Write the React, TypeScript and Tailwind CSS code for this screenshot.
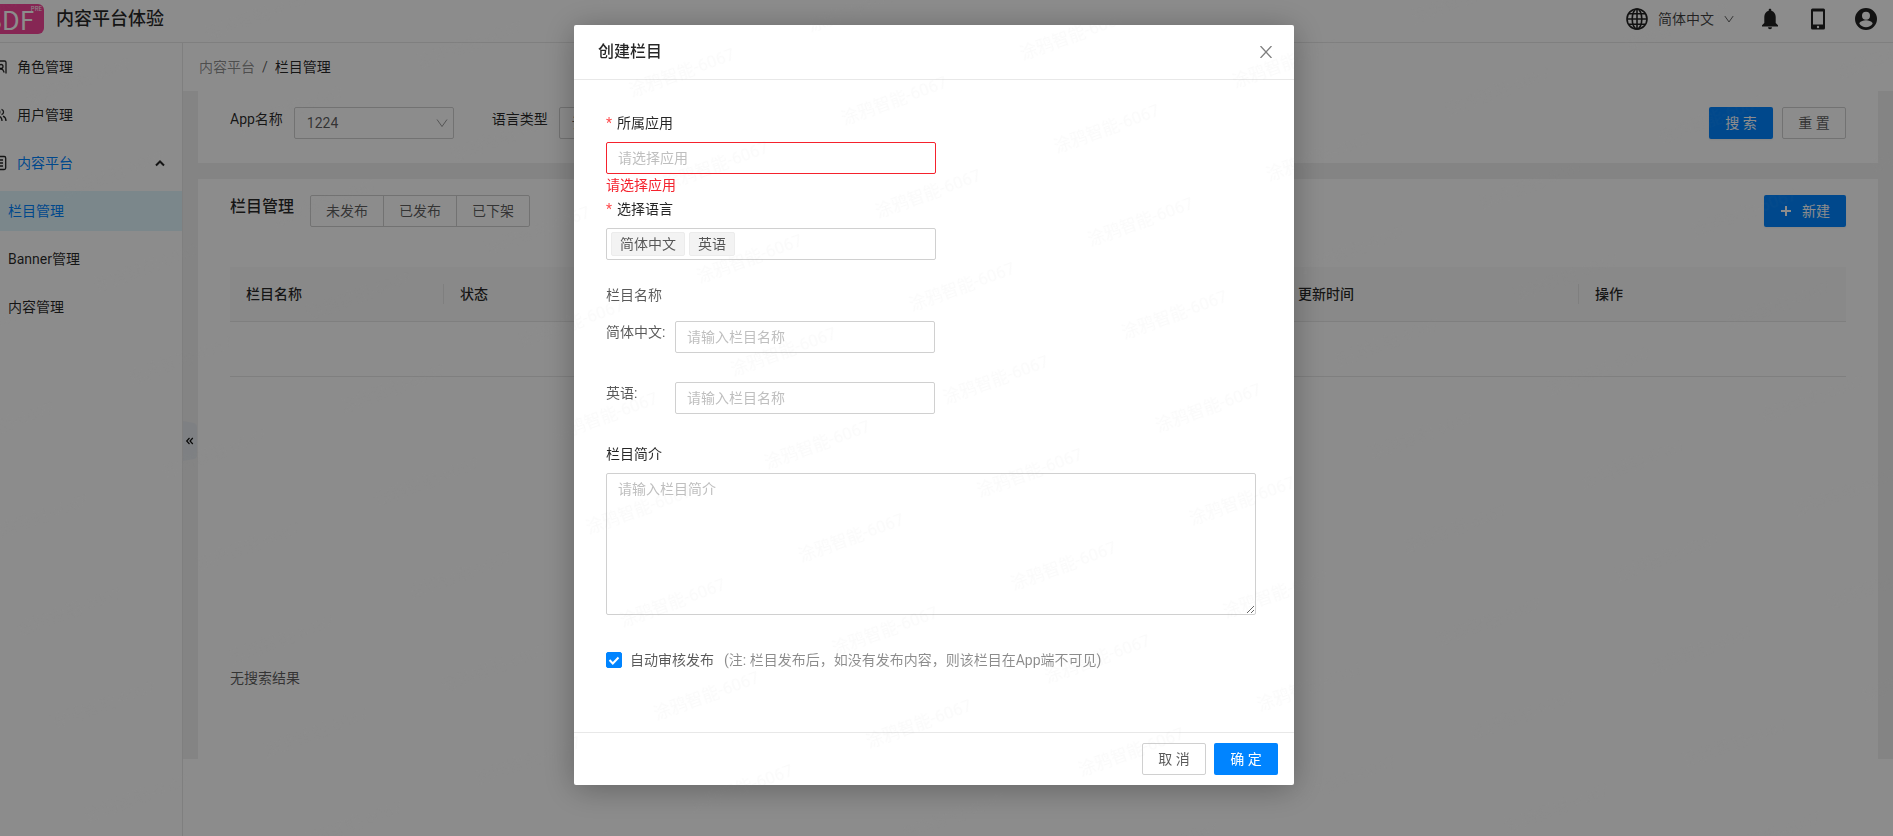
import { useState } from 'react';
import type { ReactNode } from 'react';

const menu = [
  { label: '角色管理', icon: 'role' },
  { label: '用户管理', icon: 'user' },
  { label: '内容平台', icon: 'content', open: true },
];

const subMenu = [
  { label: '栏目管理', active: true },
  { label: 'Banner管理', active: false },
  { label: '内容管理', active: false },
];

const statusTabs = ['未发布', '已发布', '已下架'];

function MenuIcon({ name }: { name: string }) {
  return (
    <svg className="h-4 w-4" viewBox="0 0 16 16" fill="none" stroke="currentColor" strokeWidth={1.3}>
      {name === 'role' && (
        <>
          <path d="M2 14.500V3.500A1.500 1.500 0 0 1 3.500 2h10A1.500 1.500 0 0 1 15 3.500v11" />
          <circle cx="10" cy="7.500" r="2" />
          <path d="M6.500 13c.3-2 1.700-3 3.500-3 1 0 1.500.4 2 1l1.200 2.500" />
        </>
      )}
      {name === 'user' && (
        <>
          <circle cx="6" cy="5" r="2.800" />
          <path d="M1 14c0-3 2-5 5-5s5 2 5 5M10.500 2.300a2.800 2.800 0 0 1 0 5.400M12 9.200c2 .8 3 2.500 3 4.800" />
        </>
      )}
      {name === 'content' && (
        <>
          <rect x="1.700" y="1.500" width="13" height="13" rx="1.500" />
          <path d="M4.500 5h7.500M4.500 8h7.500M4.500 11h7.500" />
        </>
      )}
    </svg>
  );
}

function ChevronDown({ className }: { className?: string }) {
  return (
    <svg className={className} viewBox="0 0 12 12" fill="none" stroke="currentColor">
      <path d="M1 2.500 6 9.500l5-7" />
    </svg>
  );
}

function Header() {
  return (
    <header className="flex h-[43px] items-center border-b border-[#e8e8e8] pr-4 pb-1 pl-3">
      <div className="relative flex h-[30px] w-[57px] items-center justify-end rounded-md bg-[#f54599] pr-2.5 font-['Noto_Sans_CJK_SC',sans-serif] text-[26px] leading-none font-normal text-white">
        SDF
        <span className="absolute top-px right-0.5 text-[6px] leading-2">PRE</span>
      </div>
      <h1 className="ml-3 text-lg font-medium text-black/85">内容平台体验</h1>
      <div className="ml-auto flex items-center text-[#222]">
        <button type="button" className="flex items-center text-sm text-black/75">
          <svg className="mr-2.5 h-[22px] w-[22px] text-[#222]" viewBox="0 0 22 22" fill="none" stroke="currentColor" strokeWidth={1.6}>
            <circle cx="11" cy="11" r="10" />
            <ellipse cx="11" cy="11" rx="4.800" ry="10" />
            <path d="M11 1v20M1 11h20M3 5.800h16M3 16.200h16" />
          </svg>
          简体中文
          <ChevronDown className="ml-2.5 h-2.5 w-2.5" />
        </button>
        <button type="button" aria-label="通知" className="ml-[25px]">
          <svg className="h-[22px] w-[22px]" viewBox="0 0 22 22" fill="currentColor">
            <path d="M11 .8c.8 0 1.300.5 1.300 1.300v.6c2.600.7 4.400 3 4.400 6V15l2.300 2.200v1.300H3v-1.300L5.300 15V8.700c0-3 1.800-5.300 4.400-6v-.6c0-.8.5-1.300 1.300-1.300Z" />
            <path d="M9 19.200h4a2 2 0 0 1-4 0Z" />
          </svg>
        </button>
        <button type="button" aria-label="手机" className="ml-[26px]">
          <svg className="h-[22px] w-[22px]" viewBox="0 0 22 22" fill="currentColor">
            <path fillRule="evenodd" d="M5.500.5h11A1.500 1.500 0 0 1 18 2v18a1.500 1.500 0 0 1-1.500 1.500h-11A1.500 1.500 0 0 1 4 20V2A1.500 1.500 0 0 1 5.500.5ZM6 3.500v13h10v-13Zm5 14.300a1.200 1.200 0 1 0 0 2.400 1.200 1.200 0 0 0 0-2.400Z" />
          </svg>
        </button>
        <button type="button" aria-label="账户" className="ml-[26px]">
          <svg className="h-[22px] w-[22px]" viewBox="0 0 22 22" fill="currentColor">
            <path fillRule="evenodd" d="M11 0a11 11 0 1 0 0 22 11 11 0 0 0 0-22Zm0 3.800a4 4 0 1 1 0 8 4 4 0 0 1 0-8Zm0 15.400a8 8 0 0 1-6.600-3.500c0-2.200 4.400-3.400 6.600-3.400s6.600 1.200 6.600 3.400A8 8 0 0 1 11 19.200Z" />
          </svg>
        </button>
      </div>
    </header>
  );
}

function Sidebar() {
  return (
    <nav className="w-52 shrink-0 border-r border-[#e8e8e8] pt-1 text-sm text-black/85">
      <ul className="flex flex-col gap-2">
        {menu.map((item) => (
          <li key={item.label}>
            <a href="#" className="flex h-10 items-center pr-[17px] pl-4">
              <MenuIcon name={item.icon} />
              <span className={item.open ? 'ml-2.5 text-[#0084ff]' : 'ml-2.5'}>{item.label}</span>
              {item.open && (
                <svg className="ml-auto h-2.5 w-2.5" viewBox="0 0 10 10" fill="none" stroke="currentColor" strokeWidth={2}>
                  <path d="M1 7.500 5 3.500l4 4" />
                </svg>
              )}
            </a>
          </li>
        ))}
        {subMenu.map((item) => (
          <li key={item.label}>
            <a
              href="#"
              className={
                item.active
                  ? 'flex h-10 items-center bg-[#e0f6fd] pl-[33px] text-[#0084ff]'
                  : 'flex h-10 items-center pl-[33px]'
              }
            >
              {item.label}
            </a>
          </li>
        ))}
      </ul>
    </nav>
  );
}

function FilterSelect({ id, label, children }: { id: string; label: string; children: ReactNode }) {
  return (
    <div className="flex items-start">
      <label htmlFor={id} className="mr-[11px] leading-6 text-black/85">
        {label}
      </label>
      <div className="relative">
        <select id={id} className="h-8 w-40 appearance-none rounded-xs border border-[#d0d0d0] bg-white px-3 text-black/65">
          {children}
        </select>
        <ChevronDown className="pointer-events-none absolute top-2.5 right-1.5 h-3 w-3 text-black/40" />
      </div>
    </div>
  );
}

function Content() {
  return (
    <main className="min-w-0 flex-1 text-sm">
      <div className="flex h-12 items-center gap-[7px] px-4">
        <a href="#" className="text-black/45">内容平台</a>
        <span className="text-black/65">/</span>
        <span className="text-black/85">栏目管理</span>
      </div>
      <div className="relative flex flex-col gap-4 bg-[#f0f0f0] px-[15px]">
        <section className="flex items-start bg-white px-8 pt-4 pb-6">
          <div className="flex gap-[38px]">
            <FilterSelect id="app" label="App名称">
              <option>1224</option>
            </FilterSelect>
            <FilterSelect id="lang" label="语言类型">
              <option>请选择</option>
            </FilterSelect>
          </div>
          <div className="ml-auto flex gap-[9px]">
            <button type="button" className="h-8 w-16 rounded-xs bg-[#0084ff] text-white shadow-xs">搜 索</button>
            <button type="button" className="h-8 w-16 rounded-xs border border-[#d0d0d0] text-black/65">重 置</button>
          </div>
        </section>

        <section className="bg-white px-8 pt-4 pb-[70px]">
          <div className="flex items-start">
            <h2 className="mr-4 text-base leading-6 font-medium text-black/85">栏目管理</h2>
            <div className="flex divide-x divide-[#d0d0d0] rounded-xs border border-[#d0d0d0]">
              {statusTabs.map((tab) => (
                <button key={tab} type="button" className="h-[30px] px-[15px] text-black/65">
                  {tab}
                </button>
              ))}
            </div>
            <button type="button" className="ml-auto flex h-8 items-center gap-2.5 rounded-xs bg-[#0084ff] px-4 text-white shadow-xs">
              <svg className="h-3 w-3" viewBox="0 0 12 12" stroke="currentColor" strokeWidth={2}>
                <path d="M6 1v10M1 6h10" />
              </svg>
              新建
            </button>
          </div>

          <table className="mt-10 w-full table-fixed border-collapse text-left">
            <thead>
              <tr className="h-[54px] border-b border-[#e8e8e8] bg-[#fafafa] text-black/85">
                <th className="w-[214px] px-4 font-medium">
                  <div className="-mr-4 border-r border-[#e8e8e8]">栏目名称</div>
                </th>
                <th className="px-4 font-medium">状态</th>
                <th className="w-[297px] px-4 font-medium">
                  <div className="-mr-4 border-r border-[#e8e8e8]">更新时间</div>
                </th>
                <th className="w-[267px] px-4 font-medium">操作</th>
              </tr>
            </thead>
            <tbody>
              <tr className="h-[55px] border-b border-[#e8e8e8]">
                <td colSpan={4} />
              </tr>
            </tbody>
          </table>
          <p className="mt-[290px] leading-[22px] text-black/65">无搜索结果</p>
        </section>

        {/* Sidebar collapse handle */}
        <button type="button" aria-label="收起菜单" className="absolute top-[330px] left-0">
          <svg className="h-10 w-3.5" viewBox="0 0 14 40" fill="none">
            <path d="M0 0 11 2q3 1 3 4v28q0 3-3 4L0 40Z" fill="#e6eaef" />
            <path d="M6.500 17 3.700 20l2.800 3M9.800 17 7 20l2.800 3" stroke="#111" strokeWidth={1.200} />
          </svg>
        </button>
      </div>
    </main>
  );
}

function NameField({ id, label }: { id: string; label: string }) {
  return (
    <div className="flex items-start">
      <label htmlFor={id} className="w-[69px] leading-[22px]">{label}:</label>
      <input
        id={id}
        type="text"
        placeholder="请输入栏目名称"
        className="h-8 w-[260px] rounded-xs border border-[#d0d0d0] px-[11px] outline-none placeholder:text-[#bfbfbf]"
      />
    </div>
  );
}

function CreateModal() {
  const [autoPublish, setAutoPublish] = useState(true);

  return (
    <div
      role="dialog"
      aria-modal="true"
      aria-labelledby="modal-title"
      className="w-[720px] rounded-xs bg-white text-sm leading-[22px] text-black/65 shadow-[0_4px_32px_rgba(0,0,0,0.3)]"
    >
      <div className="flex h-[55px] items-center justify-between border-b border-[#e8e8e8] pr-[22px] pl-6">
        <h2 id="modal-title" className="text-base font-medium text-black/85">创建栏目</h2>
        <button type="button" aria-label="关闭" className="text-black/50">
          <svg className="h-3 w-3" viewBox="0 0 12 12" stroke="currentColor" strokeWidth={1.300}>
            <path d="M.5 0l11 12M11.500 0 .5 12" />
          </svg>
        </button>
      </div>

      <form className="px-8 pt-8 pb-[61px]">
        <label htmlFor="owner" className="block text-black/85">
          <span className="mr-[5px] text-[#ff4d4f]">*</span>所属应用
        </label>
        <select
          id="owner"
          defaultValue=""
          className="mt-2 block h-8 w-[330px] appearance-none rounded-xs border border-[#f5222d] px-[11px] text-[#bfbfbf] outline-none"
        >
          <option value="">请选择应用</option>
        </select>
        <p className="text-[#f5222d]">请选择应用</p>

        <label htmlFor="languages" className="mt-0.5 block text-black/85">
          <span className="mr-[5px] text-[#ff4d4f]">*</span>选择语言
        </label>
        <div className="mt-2 flex h-8 w-[330px] items-center gap-1 rounded-xs border border-[#d0d0d0] px-1">
          {['简体中文', '英语'].map((lang) => (
            <span key={lang} className="rounded-xs border border-[#ececec] bg-[#f3f3f3] px-2">
              {lang}
            </span>
          ))}
          <input id="languages" type="text" className="min-w-0 flex-1 outline-none" />
        </div>

        <p className="mt-6">栏目名称</p>
        <div className="mt-[15px] flex flex-col gap-[29px]">
          <NameField id="name-zh" label="简体中文" />
          <NameField id="name-en" label="英语" />
        </div>

        <label htmlFor="intro" className="mt-[29px] block text-black/85">栏目简介</label>
        <textarea
          id="intro"
          placeholder="请输入栏目简介"
          className="mt-2 block h-[142px] w-[650px] rounded-xs border border-[#d0d0d0] px-[11px] py-1 outline-none placeholder:text-[#bfbfbf]"
        />

        <div className="mt-[34px] flex items-center">
          <label className="flex items-center">
            <span className="relative mr-2 h-4 w-4">
              <input
                type="checkbox"
                checked={autoPublish}
                onChange={(e) => setAutoPublish(e.target.checked)}
                className="block h-4 w-4 appearance-none rounded-xs border border-[#d0d0d0] checked:border-[#0084ff] checked:bg-[#0084ff]"
              />
              <svg className="pointer-events-none absolute inset-0 h-4 w-4 text-white" viewBox="0 0 16 16" fill="none" stroke="currentColor" strokeWidth={2}>
                <path d="m3.500 8 3.300 3.500 5.700-6" />
              </svg>
            </span>
            自动审核发布
          </label>
          <span className="ml-2.5 text-black/45">(注: 栏目发布后，如没有发布内容，则该栏目在App端不可见)</span>
        </div>
      </form>

      <div className="flex justify-end gap-2 border-t border-[#e8e8e8] px-4 py-2.5">
        <button type="button" className="h-8 w-16 rounded-xs border border-[#d0d0d0]">取 消</button>
        <button type="button" className="h-8 w-16 rounded-xs bg-[#0084ff] text-white">确 定</button>
      </div>
    </div>
  );
}

function Watermark() {
  return (
    <svg className="pointer-events-none fixed inset-0 h-full w-full" aria-hidden="true">
      <defs>
        <pattern id="watermark" width="190" height="99" patternUnits="userSpaceOnUse" patternTransform="translate(625 78) rotate(-20)">
          <text x="0" y="20" fontSize="17" fill="#808080" fillOpacity="0.04">
            涂鸦智能-6067
          </text>
        </pattern>
      </defs>
      <rect width="100%" height="100%" fill="url(#watermark)" />
    </svg>
  );
}

export default function App() {
  return (
    <div className="min-h-screen overflow-hidden bg-white font-[Roboto,'Noto_Sans_CJK_SC',sans-serif]">
      <div className="-ml-[25px] flex min-h-screen flex-col">
        <Header />
        <div className="flex flex-1">
          <Sidebar />
          <Content />
        </div>
      </div>
      <div className="fixed inset-y-0 right-0 -left-[25px] flex items-start justify-center bg-black/45 pt-[25px]">
        <CreateModal />
      </div>
      <Watermark />
    </div>
  );
}
